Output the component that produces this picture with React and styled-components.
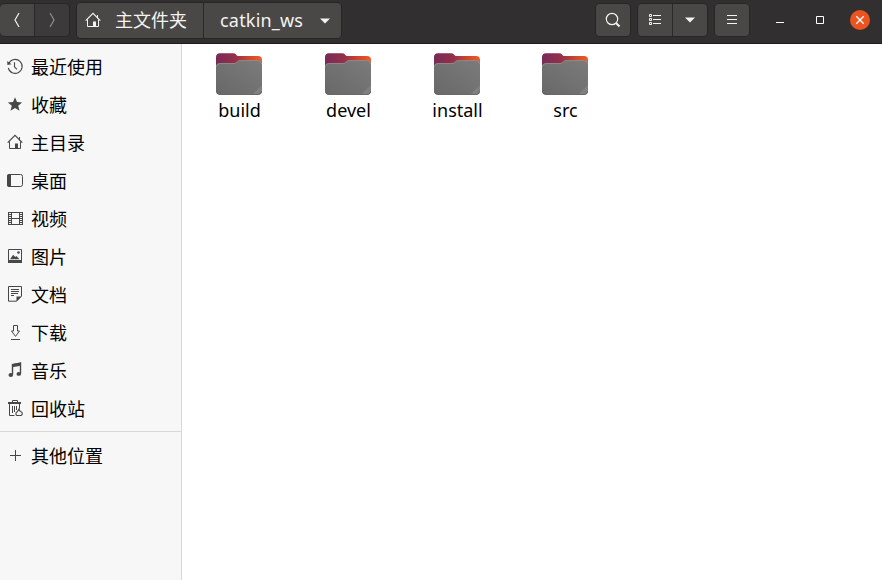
import React from "react";
import styled, { createGlobalStyle } from "styled-components";

const GlobalStyle = createGlobalStyle`
  * { box-sizing: border-box; }
  body { margin: 0; background: #fff; overflow: hidden; }
`;

const Window = styled.div`
  width: 882px;
  height: 580px;
  display: flex;
  flex-direction: column;
  font-family: "Noto Sans", "Noto Sans CJK SC", sans-serif;
  font-size: 18px;
  color: #000;
`;

const HeaderBar = styled.header`
  height: 44px;
  flex: none;
  display: flex;
  align-items: flex-start;
  background: #322f30;
  border-bottom: 1px solid #1d1b1c;
`;

const ButtonGroup = styled.div`
  display: flex;
  height: ${(p) => p.$height}px;
  margin: ${(p) => p.$margin};
  border: 1px solid #272526;
  border-left-width: ${(p) => (p.$flushLeft ? 0 : 1)}px;
  border-radius: 5px;
  overflow: hidden;
`;

const HeaderButton = styled.button`
  width: ${(p) => p.$width}px;
  height: 100%;
  padding: ${(p) => p.$padding || 0};
  border: 0;
  border-left: ${(p) => (p.$divided ? "1px solid #2a2829" : "0")};
  display: flex;
  align-items: center;
  justify-content: ${(p) => (p.$start ? "flex-start" : "center")};
  background: ${(p) => (p.$disabled ? "#3c3a3a" : "#494846")};
  color: ${(p) => (p.$disabled ? "#91908f" : "#f4f3f1")};
  font: inherit;
  white-space: nowrap;
`;

const Crumb = styled.span`
  margin: 0 0 2px ${(p) => p.$gap || 0}px;
  width: ${(p) => p.$width}px;
  line-height: 26px;
  text-align: left;
  letter-spacing: ${(p) => p.$spacing || 0}px;
`;

const Spacer = styled.div`
  flex: 1;
`;

const WindowControls = styled.div`
  display: flex;
  height: 40px;
  align-items: center;
  gap: 20px;
  padding-right: 12px;
`;

const ControlButton = styled.button`
  width: 20px;
  height: 20px;
  padding: 0;
  border: 0;
  border-radius: 50%;
  display: flex;
  background: ${(p) => (p.$close ? "#e95420" : "transparent")};
`;

const Body = styled.div`
  flex: 1;
  min-height: 0;
  display: flex;
`;

const Sidebar = styled.nav`
  width: 182px;
  flex: none;
  padding-top: 4px;
  background: #f7f7f7;
  border-right: 1px solid #d8d8d8;
`;

const Place = styled.div`
  height: 38px;
  display: flex;
  align-items: center;
  padding-left: 7px;
  gap: 8px;
  color: #474747;
`;

const PlaceLabel = styled.span`
  color: #000;
  line-height: 26px;
`;

const Separator = styled.div`
  height: 1px;
  margin: 3px 0 5px;
  background: #d9d9d9;
`;

const Glyph = styled.svg`
  display: block;
  flex: none;
  overflow: visible;
  margin-top: ${(p) => p.$shift || 0}px;
`;

const Files = styled.main`
  flex: 1;
  display: grid;
  grid-template-columns: 109px 109px 108px 108px;
  align-content: start;
  padding: 9px 0 0 3px;
  background: #fff;
`;

const FileItem = styled.div`
  width: 108px;
  display: flex;
  flex-direction: column;
  align-items: center;
`;

const FileName = styled.span`
  line-height: 26px;
  margin-top: 2px;
  padding-left: 1px;
`;

const HomePaths = () => (
  <>
    <path d="M.7 8.6 8 1.4l7.3 7.2" fill="none" stroke="currentColor" strokeWidth="1.2" />
    <path d="M2.5 7.5v7h11v-7M12.5 3v3.5" fill="none" stroke="currentColor" />
    <path d="M8 9.5h3V15H8z" fill="currentColor" />
  </>
);

const icons = {
  recent: (
    <g fill="none" stroke="currentColor" strokeWidth="1.1">
      <path d="M1.9 5.2A7 7 0 1 1 1.3 9.8" />
      <path d="M7.5 4.2v4.6l2.4 2.5" />
      <path d="M.2 3 4.5 6.2.4 7z" fill="currentColor" stroke="none" />
    </g>
  ),
  star: <path d="m8 1.3 2 4.7 5.1.4-3.9 3.3 1.3 5L8 12l-4.5 2.7 1.3-5L.9 6.4 6 6z" fill="currentColor" />,
  home: <HomePaths />,
  desktop: (
    <>
      <rect x=".5" y="2.5" width="15" height="12" rx="2" fill="none" stroke="currentColor" />
      <path d="M2 2h2v13H2a2 2 0 0 1-2-2V4a2 2 0 0 1 2-2z" fill="currentColor" />
    </>
  ),
  video: (
    <g fill="none" stroke="currentColor">
      <path d="M4.500 2v13M12.500 2v13M4 2.500h9M4 8.500h9M4 14.500h9M1.500 2v13M15.500 2v13" />
      <path d="M3 2v13M14 2v13" strokeWidth="2" strokeDasharray="1 1" />
    </g>
  ),
  image: (
    <>
      <path d="M1.5 1.5h13v11h-13z" fill="none" stroke="currentColor" />
      <path d="M1 12h14v3H1zM3 11.3l3.2-4.5 2 2.2 1.2-1.1 3.2 3.4z" fill="currentColor" />
      <circle cx="11.5" cy="4.5" r="1.3" fill="currentColor" />
    </>
  ),
  document: (
    <>
      <path d="M1.5.5h13v9.7l-5 5h-8z" fill="none" stroke="currentColor" />
      <path d="M4 3.5h8M4 5.5h8M4 7.5h7M4 9.5h3" stroke="currentColor" />
      <path d="M9.5 15.5v-5h5z" fill="currentColor" />
    </>
  ),
  download: (
    <path d="M6.5 1.5h4V7h2l-4 5.4-4-5.4h2zM4 15.5h9" fill="none" stroke="currentColor" />
  ),
  music: (
    <>
      <path d="M5.5 12.6V2.7l8-1.5v10.4" fill="none" stroke="currentColor" strokeWidth="1.4" />
      <path d="M5 2.2 14 .5v3.2l-9 1.5z" fill="currentColor" />
      <ellipse cx="3.8" cy="13" rx="2.3" ry="1.9" fill="currentColor" />
      <ellipse cx="11.8" cy="11.9" rx="2.3" ry="1.9" fill="currentColor" />
    </>
  ),
  trash: (
    <>
      <path d="M5.5 2V.5h5V2" fill="none" stroke="currentColor" />
      <path d="M1 2h13v2H1z" fill="currentColor" />
      <path d="M2.5 4v11.5h5M12.5 4v4M5.5 6v7M7.5 6v6M9.5 6v4" fill="none" stroke="currentColor" />
      <path d="M12.3 8.5v2l1.8 1.2a2.1 2.1 0 0 1 0 3.8h-4.2a2.1 2.1 0 0 1 .4-3.8z" fill="none" stroke="currentColor" strokeWidth="1.1" />
    </>
  ),
  plus: <path d="M3 8.5h11M8.5 3v11" stroke="currentColor" fill="none" />,
};

const places = [
  ["recent", "最近使用"],
  ["star", "收藏"],
  ["home", "主目录"],
  ["desktop", "桌面"],
  ["video", "视频"],
  ["image", "图片"],
  ["document", "文档"],
  ["download", "下载"],
  ["music", "音乐"],
  ["trash", "回收站"],
];

const folders = [
  { name: "build" },
  { name: "devel" },
  { name: "install" },
  { name: "src" },
];

function SidebarPlace({ icon, label }) {
  return (
    <Place>
      <Glyph width="16" height="16" viewBox="0 0 16 16" $shift={-2}>{icons[icon]}</Glyph>
      <PlaceLabel>{label}</PlaceLabel>
    </Place>
  );
}

function FolderIcon({ id }) {
  return (
    <Glyph width="46" height="42" viewBox="0 0 46 42">
      <defs>
        <linearGradient id={`back-${id}`} x1="0" y1="0" x2="1" y2="0">
          <stop offset="0" stopColor="#782a58" />
          <stop offset=".42" stopColor="#95304a" />
          <stop offset=".7" stopColor="#c9452e" />
          <stop offset="1" stopColor="#f05e24" />
        </linearGradient>
        <linearGradient id={`front-${id}`} x1="0" y1="1" x2="1" y2="0">
          <stop offset="0" stopColor="#686868" />
          <stop offset="1" stopColor="#7b7b7b" />
        </linearGradient>
      </defs>
      <path d="M0 4.200Q0 .2 4 .2h13q2 0 3 1.300l.6.7q.8.9 2.400.9h19q4 0 4 4V20H0z" fill={`url(#back-${id})`} />
      <path d="M0 14q0-3.700 4-3.700h14q1.500 0 2.500-1l1-.9q1-1 2.500-1h18q4 0 4 4V37.500q0 4.300-4 4.300H4q-4 0-4-4.300z" fill={`url(#front-${id})`} />
      <path d="M46 32v5.500q0 4.300-4 4.300h-6z" fill="#808080" />
      <path d="M.5 13.500q0-3 3.500-3h14q1.500 0 2.500-1l1-.9q1-1 2.500-1h18q3.500 0 3.500 3.500" fill="none" stroke="#968f90" strokeWidth=".8" />
      <path d="M.4 38.200q.5 3.300 3.600 3.300h38q3.100 0 3.600-3.300" fill="none" stroke="#5e5e5e" strokeWidth=".8" />
    </Glyph>
  );
}

const Chevron = ({ d, shift }) => (
  <Glyph width="16" height="16" viewBox="0 0 16 16" $shift={shift}>
    <path d={d} fill="none" stroke="currentColor" strokeWidth="1.2" />
  </Glyph>
);

const DownArrow = () => (
  <Glyph width="10" height="6" viewBox="0 0 10 6">
    <path d="M0 .5h10L5 5.500z" fill="currentColor" />
  </Glyph>
);

export default function App() {
  return (
    <Window>
      <GlobalStyle />
      <HeaderBar>
        <ButtonGroup $height={34} $margin="3px 6px 0 0" $flushLeft>
          <HeaderButton $width={34}><Chevron d="M10 1 6 8l4 7" /></HeaderButton>
          <HeaderButton $width={35} $divided $disabled><Chevron d="M6 1l4 7-4 7" /></HeaderButton>
        </ButtonGroup>
        <ButtonGroup $height={37} $margin="2px 0 0 0">
          <HeaderButton $width={126} $start $padding="0 0 0 8px">
            <Glyph width="16" height="16" viewBox="0 0 16 16" $shift={-2}><HomePaths /></Glyph>
            <Crumb $gap={14} $width={76}>主文件夹</Crumb>
          </HeaderButton>
          <HeaderButton $width={138} $divided $start $padding="0 0 0 16px">
            <Crumb $width={100} $spacing={0.2}>catkin_ws</Crumb>
            <DownArrow />
          </HeaderButton>
        </ButtonGroup>
        <Spacer />
        <ButtonGroup $height={34} $margin="3px 6px 0 0">
          <HeaderButton $width={34}>
            <Glyph width="16" height="16" viewBox="0 0 16 16">
              <g fill="none" stroke="currentColor">
                <circle cx="7" cy="7" r="5.700" strokeWidth="1.200" />
                <path d="m11 11 3.500 3.500" strokeWidth="2" />
              </g>
            </Glyph>
          </HeaderButton>
        </ButtonGroup>
        <ButtonGroup $height={34} $margin="3px 6px 0 0">
          <HeaderButton $width={34}>
            <Glyph width="12" height="12" viewBox="0 0 12 12">
              <g fill="none" stroke="currentColor">
                <path d="M.5.5h2v2h-2zM.5 4.500h2v2h-2zM.5 8.500h2v2h-2z" />
                <path d="M4 1.500h8M4 5.500h8M4 9.500h8" />
              </g>
            </Glyph>
          </HeaderButton>
          <HeaderButton $width={35} $divided><DownArrow /></HeaderButton>
        </ButtonGroup>
        <ButtonGroup $height={34} $margin="3px 20px 0 0">
          <HeaderButton $width={34}>
            <Glyph width="10" height="10" viewBox="0 0 10 10">
              <path d="M0 .5h10M0 4.500h10M0 8.500h10" stroke="currentColor" />
            </Glyph>
          </HeaderButton>
        </ButtonGroup>
        <WindowControls>
          <ControlButton>
            <Glyph width="20" height="20" viewBox="0 0 20 20"><path d="M6 12.500h8" stroke="#fff" /></Glyph>
          </ControlButton>
          <ControlButton>
            <Glyph width="20" height="20" viewBox="0 0 20 20"><path d="M6.500 6.500h7v7h-7z" fill="none" stroke="#fff" /></Glyph>
          </ControlButton>
          <ControlButton $close>
            <Glyph width="20" height="20" viewBox="0 0 20 20"><path d="m6.300 6.300 7.400 7.400m0-7.400-7.400 7.400" stroke="#fff" strokeWidth="1.300" /></Glyph>
          </ControlButton>
        </WindowControls>
      </HeaderBar>
      <Body>
        <Sidebar>
          {places.map(([icon, label]) => <SidebarPlace key={icon} icon={icon} label={label} />)}
          <Separator />
          <SidebarPlace icon="plus" label="其他位置" />
        </Sidebar>
        <Files>
          {folders.map((f) => (
            <FileItem key={f.name}>
              <FolderIcon id={f.name} />
              <FileName>{f.name}</FileName>
            </FileItem>
          ))}
        </Files>
      </Body>
    </Window>
  );
}
